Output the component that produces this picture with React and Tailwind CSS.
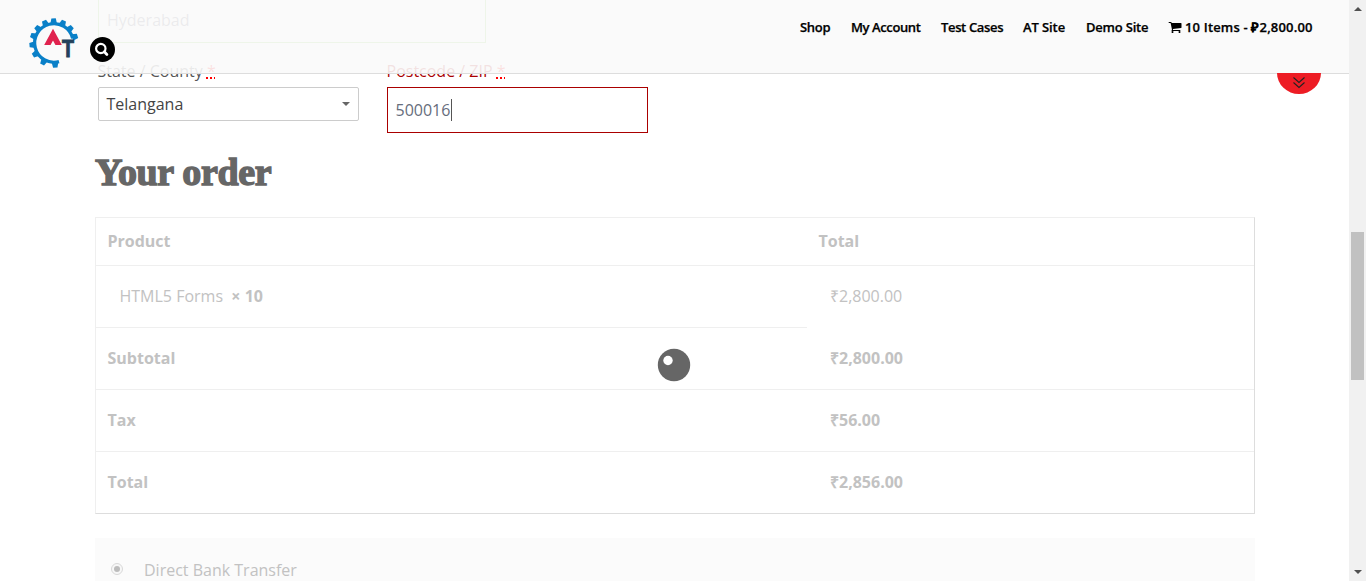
import React from "react";

const teeth = [-161, -138, -114, -91, -66, -42, -17, 87, 119, 149, 175];

function Logo() {
  return (
    <svg viewBox="0 0 52 54" className="block h-[54px] w-[52px]">
      <clipPath id="chevron"><rect x="-12" y="-20" width="24" height="22" /></clipPath>
      <g transform="translate(26 27)">
        <path d="M18.7 -4.6 A19.3 19.3 0 1 0 5 18.6" fill="none" stroke="#0a80c8" strokeWidth="3.3" />
        {teeth.map((a) => (
          <path key={a} d="M19 -3.4 L24.6 -2.2 L24.6 2.2 L19 3.4 Z" fill="#0a80c8" transform={`rotate(${a})`} />
        ))}
        <path d="M-8.8 6 L-1 -8.4 L6.8 6" clipPath="url(#chevron)" fill="none" stroke="#e0224e" strokeWidth="5.6" strokeMiterlimit="8" />
        <text transform="translate(8 14.4) scale(.8 1)" fontFamily="Liberation Sans" fontWeight="700" fontSize="24.5" fill="#23415b" stroke="#23415b" strokeWidth="1">T</text>
      </g>
    </svg>
  );
}

function Cart() {
  return (
    <svg viewBox="0 0 1792 1792" className="-ml-px mr-[3px] h-[14px] w-[14px]" fill="currentColor">
      <path d="M704 1536q0 52-38 90t-90 38-90-38-38-90 38-90 90-38 90 38 38 90zm896 0q0 52-38 90t-90 38-90-38-38-90 38-90 90-38 90 38 38 90zm128-1088v512q0 24-16.5 42.5t-40.5 21.5l-1044 122q13 60 13 70 0 16-24 64h920q26 0 45 19t19 45-19 45-45 19h-1024q-26 0-45-19t-19-45q0-11 8-31.5t16-36 21.5-40 15.5-29.5l-177-823h-204q-26 0-45-19t-19-45 19-45 45-19h256q16 0 28.5 6.5t19.5 15.5 13 24.5 8 26 5.5 29.5 4.5 26h1201q26 0 45 19t19 45z" />
    </svg>
  );
}

function Required() {
  return <span className="text-[#f00] underline decoration-dotted decoration-2 underline-offset-0">*</span>;
}

function Row({ label, value, split }) {
  return (
    <div className="flex h-[62px]">
      <div className="flex w-[711px] items-center border-b border-[#efefef] pb-px pl-[11.5px] font-bold">{label}</div>
      <div className={"flex flex-1 items-center pl-[23px] " + (split ? "pb-[2px]" : "border-b border-[#efefef] pb-px font-bold")}>{value}</div>
    </div>
  );
}

export default function App() {
  return (
    <div className="relative flex h-[581px] w-[1366px] overflow-hidden bg-white font-['Open_Sans',sans-serif] text-base leading-6">
      <main className="w-[1349px] overflow-hidden pl-[95px]">
        <div className="ml-[3px] flex h-[43px] w-[388px] border-x border-b border-[#69bf29]/80 pl-2 pt-2 text-[#667]">Hyderabad</div>
        <div className="ml-[3px] flex gap-7">
          <div className="w-[261px]">
            <div className="mt-4 h-7 whitespace-pre leading-6 text-[#555]"><span className="-ml-[0.5px]">State / County </span><Required /></div>
            <div className="flex h-[34px] items-center justify-between rounded-xs border border-[#ccc] pl-2 pr-2 text-[#444]">
              <span className="-ml-[0.5px]">Telangana</span>
              <svg viewBox="0 0 8 4" className="h-1 w-2"><path d="M0 0h8L4 4z" fill="#666" /></svg>
            </div>
          </div>
          <div className="w-[261px]">
            <div className="mt-4 h-7 whitespace-pre leading-6 text-[#a00]"><span className="-ml-[0.5px]">Postcode / ZIP </span><Required /></div>
            <div className="flex h-[46px] items-center border border-[#a00] pl-[7.5px] text-[#666d7c]">
              500016<span className="ml-[0.5px] h-[22px] w-px bg-[#555]" />
            </div>
          </div>
        </div>
        <h2 className="mt-4 h-[68px] whitespace-nowrap pt-px font-['Liberation_Serif',serif] text-[38px] font-bold leading-[44px] tracking-[-0.35px] text-[#666] [-webkit-text-stroke:1.4px_#666]">Your order</h2>
        <div className="h-[297px] w-[1160px] border-l border-t border-r border-b border-l-[#efefef] border-t-[#efefef] border-r-[#ddd] border-b-[#ddd] text-[#c2c2c2]">
          <div className="flex h-12 items-center border-b border-[#efefef] pb-px font-bold">
            <div className="w-[711px] pl-[11.5px]">Product</div>
            <div className="pl-[11.5px]">Total</div>
          </div>
          <Row split label={<span className="whitespace-pre pl-3"><span className="font-normal">HTML5 Forms  </span>× 10</span>} value="₹2,800.00" />
          <Row label="Subtotal" value="₹2,800.00" />
          <Row label="Tax" value="₹56.00" />
          <div className="flex h-[61px] items-center pb-px font-bold">
            <div className="w-[711px] pl-[11.5px]">Total</div>
            <div className="pl-[23px]">₹2,856.00</div>
          </div>
        </div>
        <div className="mt-6 flex h-16 w-[1160px] items-start bg-[#fbfbfb] pl-4 pt-5 text-[#c2c2c2]">
          <svg viewBox="0 0 12 12" className="mt-[5px] h-3 w-3"><circle cx="6" cy="6" r="5.5" fill="#f7f7f7" stroke="#d8d8d8" /><circle cx="6" cy="6" r="3" fill="#bcbcbc" /></svg>
          <span className="ml-[21px]">Direct Bank Transfer</span>
        </div>
      </main>
      <aside className="flex w-[17px] flex-col items-center bg-[#f1f1f1]">
        <svg viewBox="0 0 8 4" className="mt-[7px] h-1 w-2"><path d="M0 4h8L4 0z" fill="#505050" /></svg>
        <div className="mt-[221px] h-[148px] w-[13px] bg-[#c1c1c1]" />
        <svg viewBox="0 0 8 4" className="mb-[7px] mt-auto h-1 w-2"><path d="M0 0h8L4 4z" fill="#505050" /></svg>
      </aside>
      <header className="absolute left-0 top-0 flex h-[74px] w-[1349px] items-start border-b border-[#ddd] bg-[#fafafa]/90">
        <div className="ml-7 mt-4"><Logo /></div>
        <svg viewBox="0 0 25 25" className="ml-[10px] mt-[37px] h-[25px] w-[25px]">
          <circle cx="12.5" cy="12.5" r="12.5" fill="#000" />
          <circle cx="10.8" cy="11.5" r="4.7" fill="none" stroke="#fff" strokeWidth="2.2" />
          <path d="M14.3 14.8l2.6 2.6" stroke="#fff" strokeWidth="2.8" strokeLinecap="round" />
        </svg>
        <nav className="ml-[685px] mt-[17px] flex whitespace-nowrap text-[13px] font-semibold leading-5 text-black [-webkit-text-stroke:0.25px_#000]">
          <span className="w-[51px] tracking-[-0.3px]">Shop</span>
          <span className="w-[90px] tracking-[-0.4px]">My Account</span>
          <span className="w-[82px] tracking-[-0.35px]">Test Cases</span>
          <span className="w-[63px] tracking-[-0.1px]">AT Site</span>
          <span className="w-[83px] tracking-[-0.2px]">Demo Site</span>
          <span className="flex items-center tracking-[0.17px]"><Cart />10 Items - ₽2,800.00</span>
        </nav>
      </header>
      <svg viewBox="0 0 44 21" className="absolute left-[1277px] top-[73px] h-[21px] w-11">
        <path d="M0 0A22 21 0 0 0 44 0z" fill="#ed1c24" />
        <path d="M16.5 4.5l5.5 5 5.5-5M16.5 9.5l5.5 5 5.5-5" fill="none" stroke="#222" strokeWidth="1.1" />
      </svg>
      <svg viewBox="0 0 34 34" className="absolute left-[657px] top-[348px] h-[34px] w-[34px]">
        <circle cx="17" cy="17" r="16.2" fill="#666" />
        <circle cx="11" cy="12.5" r="4.7" fill="#fff" />
      </svg>
    </div>
  );
}
